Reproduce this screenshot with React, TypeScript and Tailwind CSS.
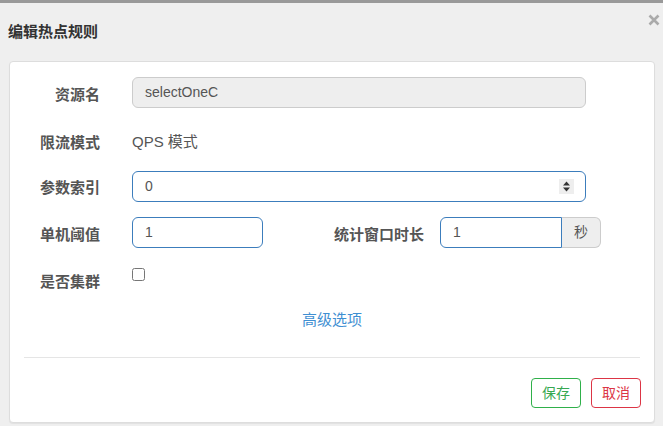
import React from "react";

const FONT = { fontFamily: '"Liberation Sans", "Noto Sans CJK SC", sans-serif' };

function Label({ children, className = "" }: { children: React.ReactNode; className?: string }) {
  return (
    <label className={`w-[90px] shrink-0 text-right text-[15px] font-bold leading-[20px] text-[#555] ${className}`}>
      {children}
    </label>
  );
}

function Spinner() {
  return (
    <svg width="15" height="15" viewBox="0 0 15 15" className="bg-[#eeeeee]">
      <path d="M7.5 2.5 L11 6.5 L4 6.5 Z" fill="#333" />
      <path d="M7.5 12.5 L11 8.5 L4 8.5 Z" fill="#333" />
    </svg>
  );
}

export default function App() {
  return (
    <div style={FONT} className="w-[663px] h-[426px] overflow-hidden border-t-[3px] border-[#999] bg-[#efefef]">
      {/* header */}
      <div className="flex h-[58px] justify-between pl-[8px] pr-[3px]">
        <h4 className="self-center text-[15px] font-bold text-[#333]">编辑热点规则</h4>
        <button className="mt-[11px] self-start p-0" aria-label="close">
          <svg width="12" height="12" viewBox="0 0 12 12">
            <path d="M1.5 1.5 L10.5 10.5 M10.5 1.5 L1.5 10.5" stroke="#aaaaaa" strokeWidth="2.6" />
          </svg>
        </button>
      </div>

      {/* body card */}
      <div className="ml-[9px] flex h-[362px] w-[646px] flex-col rounded-[4px] border border-[#dddddd] bg-white shadow-[0_1px_1px_rgba(0,0,0,0.06)]">
        {/* 资源名 */}
        <div className="mt-[15px] flex h-[31px] items-center">
          <Label className="pt-[4px]">资源名</Label>
          <div className="ml-[32px] flex h-[31px] w-[454px] items-center rounded-[6px] border border-[#cccccc] bg-[#eeeeee] px-[12px] text-[14px] text-[#555]">
            selectOneC
          </div>
        </div>

        {/* 限流模式 */}
        <div className="mt-[19px] flex h-[31px] items-center">
          <Label>限流模式</Label>
          <span className="ml-[32px] text-[15px] text-[#555]">QPS 模式</span>
        </div>

        {/* 参数索引 */}
        <div className="mt-[13px] flex h-[31px] items-center">
          <Label className="pt-[2px]">参数索引</Label>
          <div className="ml-[32px] flex h-[31px] w-[454px] items-center justify-between rounded-[6px] border border-[#3c7dbc] bg-white pl-[12px] pr-[11px] text-[14px] text-[#555]">
            <span>0</span>
            <Spinner />
          </div>
        </div>

        {/* 单机阈值 / 统计窗口时长 */}
        <div className="mt-[15px] flex h-[31px] items-center">
          <Label className="pt-[4px]">单机阈值</Label>
          <div className="ml-[32px] flex h-[31px] w-[131px] items-center rounded-[6px] border border-[#3c7dbc] bg-white px-[12px] text-[14px] text-[#555]">
            1
          </div>
          <span className="w-[161px] pt-[4px] text-right text-[15px] font-bold leading-[20px] text-[#555]">统计窗口时长</span>
          <div className="ml-[16px] flex">
            <div className="flex h-[31px] w-[122px] items-center rounded-l-[6px] border border-[#3c7dbc] bg-white px-[12px] text-[14px] text-[#555]">
              1
            </div>
            <div className="flex h-[31px] w-[39px] items-center justify-center rounded-r-[6px] border border-l-0 border-[#cccccc] bg-[#eeeeee] text-[14px] text-[#555]">
              秒
            </div>
          </div>
        </div>

        {/* 是否集群 */}
        <div className="mt-[20px] flex items-start">
          <Label className="pt-[4px]">是否集群</Label>
          <input type="checkbox" className="m-0 ml-[32px] h-[13px] w-[13px]" />
        </div>

        {/* 高级选项 */}
        <div className="mt-[18px] text-center text-[15px] leading-[20px]">
          <a className="cursor-pointer text-[#3f8fd2]">高级选项</a>
        </div>

        <div className="mx-[14px] mt-[27px] h-px bg-[#e5e5e5]" />

        {/* footer */}
        <div className="mr-[13px] mt-[20px] flex justify-end gap-[10px]">
          <button className="h-[30px] w-[50px] rounded-[4px] border border-[#2fb04a] bg-white text-[14px] text-[#36a852]">
            保存
          </button>
          <button className="h-[30px] w-[50px] rounded-[4px] border border-[#dc3545] bg-white text-[14px] text-[#dc3545]">
            取消
          </button>
        </div>
      </div>
    </div>
  );
}
